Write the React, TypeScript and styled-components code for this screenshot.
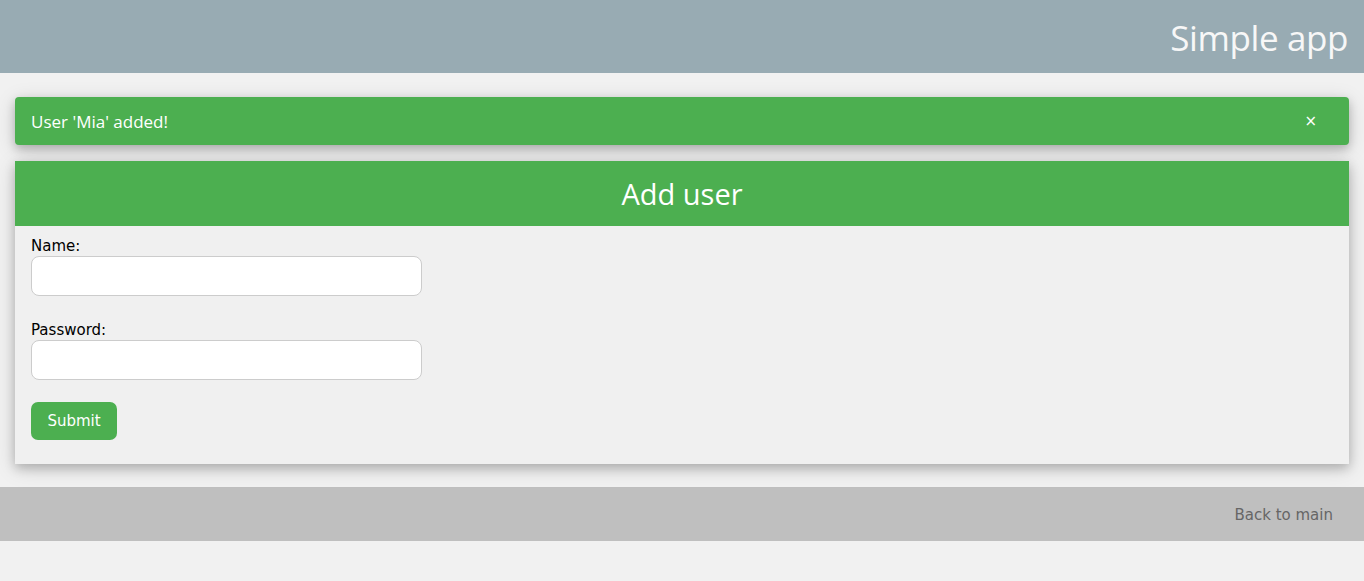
import * as React from "react";
import styled, { createGlobalStyle } from "styled-components";

const GlobalStyle = createGlobalStyle`
  html, body {
    margin: 0;
    padding: 0;
    background: #f1f1f1;
    font-family: "DejaVu Sans", Verdana, sans-serif;
    font-size: 15px;
  }
`;

const TopBar = styled.header`
  height: 73px;
  background-color: #98abb3;
  display: flex;
  align-items: center;
  justify-content: flex-end;
  padding: 0 16px;

  .app-title {
    font-family: "Open Sans", "Segoe UI", sans-serif;
    font-size: 35px;
    font-weight: 400;
    color: #f7f7f7;
    letter-spacing: -0.4px;
    margin-top: 2px;
  }
`;

const Content = styled.main`
  padding: 24px 15px 23px;
  display: flex;
  flex-direction: column;
  gap: 16px;
`;

const Alert = styled.div`
  height: 48px;
  background-color: #4caf50;
  color: #ffffff;
  border-radius: 4px;
  box-shadow: 0 4px 10px 0 rgba(0, 0, 0, 0.2), 0 4px 20px 0 rgba(0, 0, 0, 0.15);
  display: flex;
  align-items: center;
  justify-content: space-between;
  padding: 0 32px 0 16px;

  .alert-text {
    font-family: "Open Sans", "Segoe UI", sans-serif;
    font-size: 17px;
  }
  .close {
    font-size: 15px;
    cursor: pointer;
  }
`;

const Card = styled.section`
  background-color: #f0f0f0;
  box-shadow: 0 4px 10px 0 rgba(0, 0, 0, 0.2), 0 4px 20px 0 rgba(0, 0, 0, 0.15);
`;

const CardHeader = styled.div`
  height: 65px;
  background-color: #4caf50;
  color: #ffffff;
  display: flex;
  align-items: center;
  justify-content: center;

  h2 {
    margin: 0;
    font-family: "Open Sans", "Segoe UI", sans-serif;
    font-size: 29px;
    font-weight: 400;
  }
`;

const Form = styled.form`
  padding: 10px 16px 24px;
  display: flex;
  flex-direction: column;
  align-items: flex-start;
`;

const Field = styled.div<{ $mb?: string }>`
  display: flex;
  flex-direction: column;
  margin-bottom: ${(p) => p.$mb || "0"};

  label {
    color: #000;
    font-size: 15px;
    line-height: 20px;
  }
`;

const TextInput = styled.input`
  width: 391px;
  height: 40px;
  box-sizing: border-box;
  border: 1px solid #cccccc;
  border-radius: 8px;
  background: #ffffff;
  padding: 8px;
  font-size: 15px;
  outline: none;
`;

const SubmitButton = styled.button`
  background-color: #4caf50;
  color: #ffffff;
  border: none;
  border-radius: 7px;
  height: 38px;
  width: 86px;
  padding: 0;
  font-family: "DejaVu Sans", Verdana, sans-serif;
  font-size: 15px;
  cursor: pointer;
`;

const Footer = styled.footer`
  height: 54px;
  box-sizing: border-box;
  background-color: #bfbfbf;
  display: flex;
  align-items: center;
  justify-content: flex-end;
  padding: 1px 31px 0;

  a {
    color: #666666;
    text-decoration: none;
    font-size: 15px;
  }
`;

export default function App() {
  return (
    <>
      <GlobalStyle />
      <TopBar>
        <div className="app-title">Simple app</div>
      </TopBar>
      <Content>
        <Alert>
          <span className="alert-text">User 'Mia' added!</span>
          <span className="close">×</span>
        </Alert>
        <Card>
          <CardHeader>
            <h2>Add user</h2>
          </CardHeader>
          <Form onSubmit={(e) => e.preventDefault()}>
            <Field $mb="24px">
              <label>Name:</label>
              <TextInput type="text" />
            </Field>
            <Field $mb="22px">
              <label>Password:</label>
              <TextInput type="password" />
            </Field>
            <SubmitButton type="submit">Submit</SubmitButton>
          </Form>
        </Card>
      </Content>
      <Footer>
        <a href="#">Back to main</a>
      </Footer>
    </>
  );
}
